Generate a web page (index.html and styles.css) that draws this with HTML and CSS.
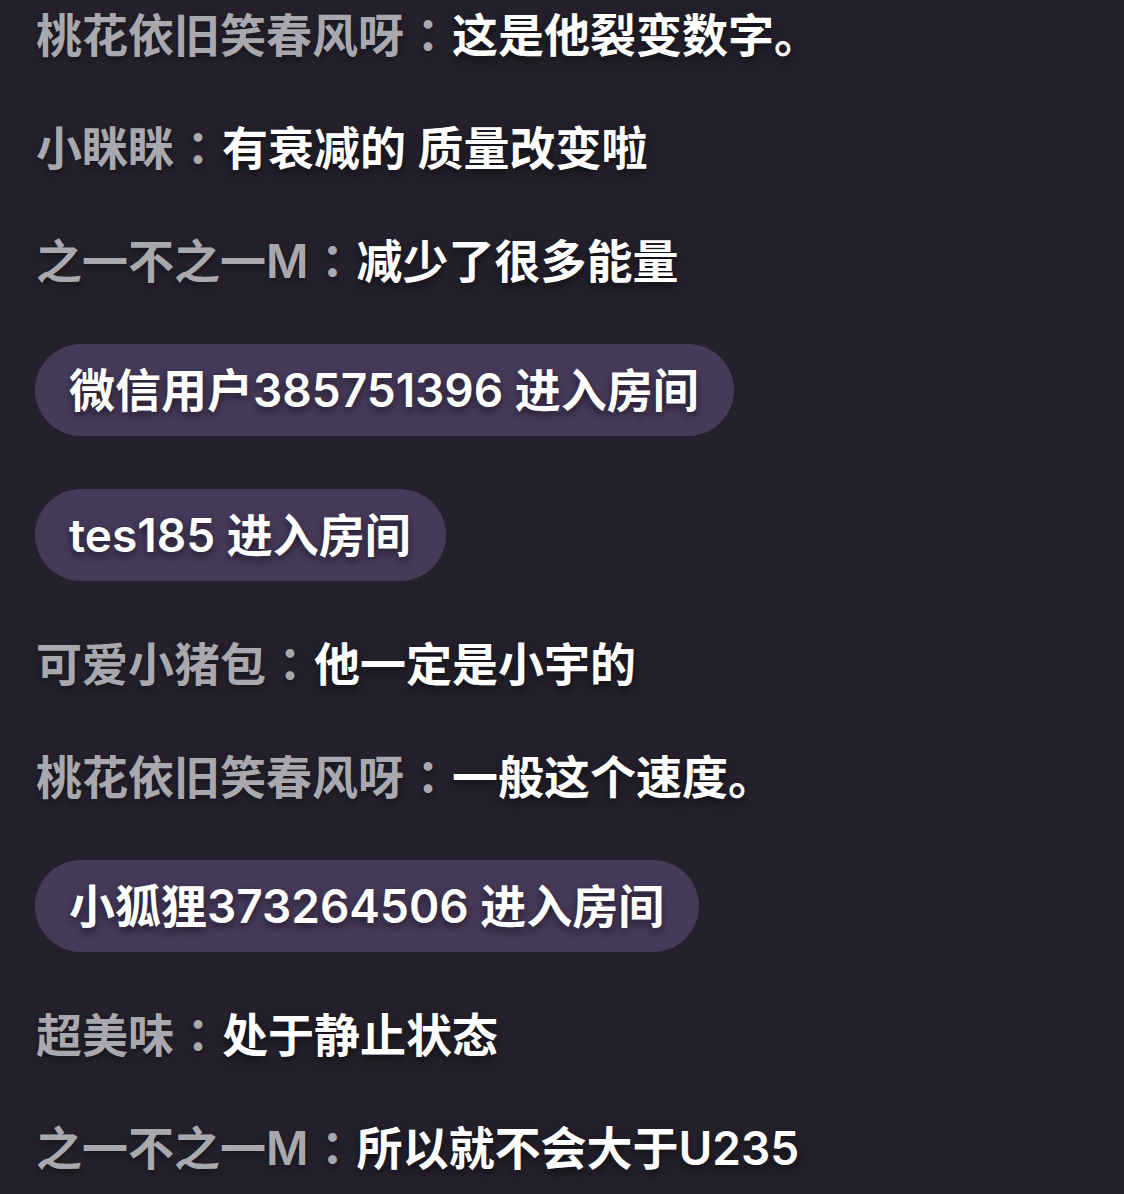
FILE: index.html
```html
<!DOCTYPE html>
<html lang="zh-CN">
<head>
    <meta charset="UTF-8">
    <meta name="viewport" content="width=device-width, initial-scale=1.0">
    <title>直播间弹幕</title>
    <link rel="stylesheet" href="styles.css">
</head>
<body>
    <!--LISTE DES MESSAGES-->
    <div class="chat">
        <div class="msg"><span class="nom">桃花依旧笑春风呀<span class="dp">：</span></span><span class="texte">这是他裂变数字。</span></div>
        <div class="msg"><span class="nom">小眯眯<span class="dp">：</span></span><span class="texte">有衰减的 质量改变啦</span></div>
        <div class="msg"><span class="nom">之一不之一M<span class="dp">：</span></span><span class="texte">减少了很多能量</span></div>
        <div class="entree">微信用户385751396 进入房间</div>
        <div class="entree">tes185 进入房间</div>
        <div class="msg"><span class="nom">可爱小猪包<span class="dp">：</span></span><span class="texte">他一定是小宇的</span></div>
        <div class="msg"><span class="nom">桃花依旧笑春风呀<span class="dp">：</span></span><span class="texte">一般这个速度。</span></div>
        <div class="entree">小狐狸373264506 进入房间</div>
        <div class="msg"><span class="nom">超美味<span class="dp">：</span></span><span class="texte">处于静止状态</span></div>
        <div class="msg"><span class="nom">之一不之一M<span class="dp">：</span></span><span class="texte">所以就不会大于U235</span></div>
    </div>
    <!--FIN LISTE DES MESSAGES-->
</body>
</html>
```

FILE: styles.css
```css
body{
    margin:0;
    background-color:#24212c;
    font-family:"Inter","Noto Sans CJK SC",sans-serif;
    font-size:46px;
    font-weight:600;
}

.chat{
    display:flex;
    flex-direction:column;
    align-items:flex-start;
    gap:53px;
    padding:5px 0 0 36px;
}

.msg{
    height:54px;
    line-height:54px;
    padding-bottom:6px;
    white-space:nowrap;
}

.nom{
    color:#a9a8ae;
    text-shadow:0 3px 6px rgba(0,0,0,0.45);
}

/* deux-points centre comme dans la capture */
.dp{
    display:inline-block;
    width:48px;
    text-align:center;
    font-family:"Noto Sans CJK TC",sans-serif;
}

.texte{
    color:#ffffff;
    text-shadow:0 4px 8px rgba(0,0,0,0.6);
}

.entree{
    height:60px;
    line-height:60px;
    padding:16px 35px 16px 34px;
    border-radius:46px;
    background-color:#463a5a;
    color:#ffffff;
    text-shadow:0 4px 8px rgba(0,0,0,0.55);
    white-space:nowrap;
    margin-left:-1px;
}
```
